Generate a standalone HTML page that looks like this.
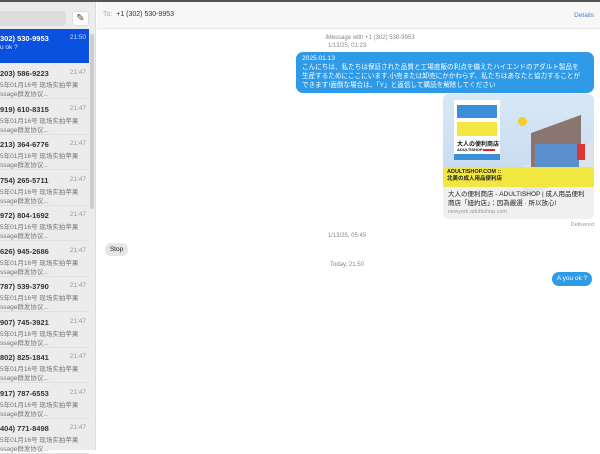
<!DOCTYPE html>
<html><head><meta charset="utf-8"><style>
*{margin:0;padding:0;box-sizing:border-box}
body{width:600px;height:450px;overflow:hidden;background:#fff;font-family:"Liberation Sans","Noto Sans CJK SC",sans-serif;position:relative}
.topline{position:absolute;left:0;top:0;width:600px;height:2px;background:#555}
.side{position:absolute;left:0;top:2px;width:96px;height:448px;background:#ececec;border-right:1px solid #ddd}
.search{position:absolute;left:0;top:9px;width:66px;height:15px;background:#dcdcdc;border-radius:0 4px 4px 0}
.comp{position:absolute;left:72px;top:9px;width:17px;height:15px;background:#fff;border-radius:3px;border:1px solid #ddd;font-size:10px;text-align:center;line-height:13px;color:#444}
.row{position:absolute;left:0;width:89px;height:35px;font-size:6.5px;color:#777;border-bottom:1px solid #e0e0e0}
.row b{position:absolute;left:0;top:5px;font-size:7.5px;color:#333}
.row i{position:absolute;right:3px;top:5px;font-style:normal;font-size:6.5px;color:#999}
.row .l1{position:absolute;left:0;top:15px;white-space:nowrap}
.row .l2{position:absolute;left:0;top:24px;white-space:nowrap}
.sel{background:#0b51e0;color:#dfe6ff;border:none}
.sel b{color:#fff}.sel i{color:#cfdaff}
.scroll{position:absolute;left:90px;top:32px;width:4px;height:175px;background:#ccc;border-radius:2px}
.hdr{position:absolute;left:97px;top:2px;width:503px;height:27px;background:#f7f7f7;border-bottom:1px solid #e8e8e8}
.hdr .to{position:absolute;left:6px;top:9px;font-size:7px;color:#333}
.hdr .to span{color:#aaa}
.hdr .det{position:absolute;right:6px;top:10px;font-size:6.5px;color:#4a7fd0}
.c{position:absolute;font-size:6px;color:#888;text-align:center;width:200px}
.bub{position:absolute;left:296px;top:52px;width:298px;height:41px;background:#2e9ae8;border-radius:7px;color:#fff;font-size:6.6px;line-height:9px;padding:2px 6px;white-space:nowrap;overflow:hidden;font-family:"Liberation Sans","Noto Sans CJK JP",sans-serif}
.card{position:absolute;left:443px;top:94px;width:151px;height:125px;border-radius:6px;overflow:hidden;background:#f0f0f0}
.img{position:absolute;left:0;top:0;width:151px;height:93px;background:linear-gradient(#d8e8f5,#c6daf0)}
.ybar{position:absolute;left:0;top:73px;width:151px;height:20px;background:#f2e640;font-size:5.5px;font-weight:bold;color:#222;padding:2px 4px;line-height:7px}
.sign{position:absolute;left:11px;top:6px;width:46px;height:60px;background:#fff}
.ctext{position:absolute;left:5px;top:96px;font-size:6.5px;line-height:9px;color:#222;font-family:"Liberation Sans","Noto Sans CJK JP",sans-serif}
.url{position:absolute;left:5px;top:115px;font-size:5.5px;color:#999}
</style></head><body>
<div class="topline"></div>
<div class="side">
<div class="search"></div><div class="comp">✎</div>
<div class="row sel" style="top:27px;height:34px"><b>302) 530-9953</b><i>21:50</i><div class="l1">u ok ?</div></div>
<div class="row" style="top:62px"><b>203) 586-9223</b><i>21:47</i><div class="l1">5年01月16号 现场实拍苹果</div><div class="l2">ssage群发协议...</div></div>
<div class="row" style="top:98px"><b>919) 610-8315</b><i>21:47</i><div class="l1">5年01月16号 现场实拍苹果</div><div class="l2">ssage群发协议...</div></div>
<div class="row" style="top:133px"><b>213) 364-6776</b><i>21:47</i><div class="l1">5年01月16号 现场实拍苹果</div><div class="l2">ssage群发协议...</div></div>
<div class="row" style="top:169px"><b>754) 265-5711</b><i>21:47</i><div class="l1">5年01月16号 现场实拍苹果</div><div class="l2">ssage群发协议...</div></div>
<div class="row" style="top:204px"><b>972) 804-1692</b><i>21:47</i><div class="l1">5年01月16号 现场实拍苹果</div><div class="l2">ssage群发协议...</div></div>
<div class="row" style="top:240px"><b>626) 945-2686</b><i>21:47</i><div class="l1">5年01月16号 现场实拍苹果</div><div class="l2">ssage群发协议...</div></div>
<div class="row" style="top:275px"><b>787) 539-3790</b><i>21:47</i><div class="l1">5年01月16号 现场实拍苹果</div><div class="l2">ssage群发协议...</div></div>
<div class="row" style="top:311px"><b>907) 745-3921</b><i>21:47</i><div class="l1">5年01月16号 现场实拍苹果</div><div class="l2">ssage群发协议...</div></div>
<div class="row" style="top:346px"><b>802) 825-1841</b><i>21:47</i><div class="l1">5年01月16号 现场实拍苹果</div><div class="l2">ssage群发协议...</div></div>
<div class="row" style="top:382px"><b>917) 787-6553</b><i>21:47</i><div class="l1">5年01月16号 现场实拍苹果</div><div class="l2">ssage群发协议...</div></div>
<div class="row" style="top:417px"><b>404) 771-8498</b><i>21:47</i><div class="l1">5年01月16号 现场实拍苹果</div><div class="l2">ssage群发协议...</div></div>
<div class="scroll"></div>
</div>
<div class="hdr"><div class="to"><span>To:</span> &nbsp;+1 (302) 530-9953</div><div class="det">Details</div></div>
<div class="c" style="left:270px;top:35px">iMessage with +1 (302) 530-9953</div>
<div class="c" style="left:247px;top:43px">1/13/25, 01:23</div>
<div class="bub">2025.01.13<br>こんにちは、私たちは保証された品質と工場直販の利点を備えたハイエンドのアダルト製品を<br>生産するためにここにいます.小売または卸売にかかわらず、私たちはあなたと協力することが<br>できます!面倒な場合は、「Y」と返信して購読を解除してください</div>
<div class="card"><div class="img">
<div class="sign"><div style="position:absolute;left:3px;top:5px;width:40px;height:13px;background:#3a8fd8"></div><div style="position:absolute;left:3px;top:22px;width:40px;height:14px;background:#f2e640"></div><div style="position:absolute;left:3px;top:39px;font-size:6px;font-weight:bold;color:#111;white-space:nowrap">大人の便利商店</div><div style="position:absolute;left:3px;top:47px;font-size:4px;font-weight:bold;color:#111">ADULTISHOP<span style="display:inline-block;width:12px;height:2px;background:#d22"></span></div><div style="position:absolute;left:0;top:54px;width:46px;height:6px;background:#3a8fd8"></div></div>
<div style="position:absolute;left:75px;top:23px;width:9px;height:9px;border-radius:50%;background:#f3cf2a"></div>
<div style="position:absolute;left:80px;top:60px;width:70px;height:30px;background:#dde4ec;transform:skewY(-20deg)"></div>
<div style="position:absolute;left:88px;top:30px;width:50px;height:42px;background:#8a7670;transform:skewY(-20deg)"></div>
<div style="position:absolute;left:92px;top:50px;width:44px;height:24px;background:#5a8fd0"></div>
<div style="position:absolute;left:134px;top:50px;width:8px;height:16px;background:#d33"></div>
<div class="ybar">ADULTISHOP.COM ::<br>北美の成人用品便利店</div>
</div>
<div class="ctext">大人の便利商店 - ADULTISHOP | 成人用品便利<br>商店「紐約店」：因為嚴選 · 所以放心!</div>
<div class="url">newyork.adultishop.com</div>
</div>
<div style="position:absolute;right:6px;top:222px;font-size:5.5px;color:#999">Delivered</div>
<div class="c" style="left:247px;top:233px">1/13/25, 05:45</div>
<div style="position:absolute;left:105px;top:243px;width:23px;height:13px;background:#e6e6e6;border-radius:6px;font-size:6.5px;color:#222;text-align:center;line-height:13px">Stop</div>
<div class="c" style="left:247px;top:262px">Today, 21:50</div>
<div style="position:absolute;left:552px;top:272px;width:40px;height:14px;background:#2e9ae8;border-radius:7px;font-size:6.5px;color:#fff;text-align:center;line-height:14px">A you ok ?</div>
</body></html>
